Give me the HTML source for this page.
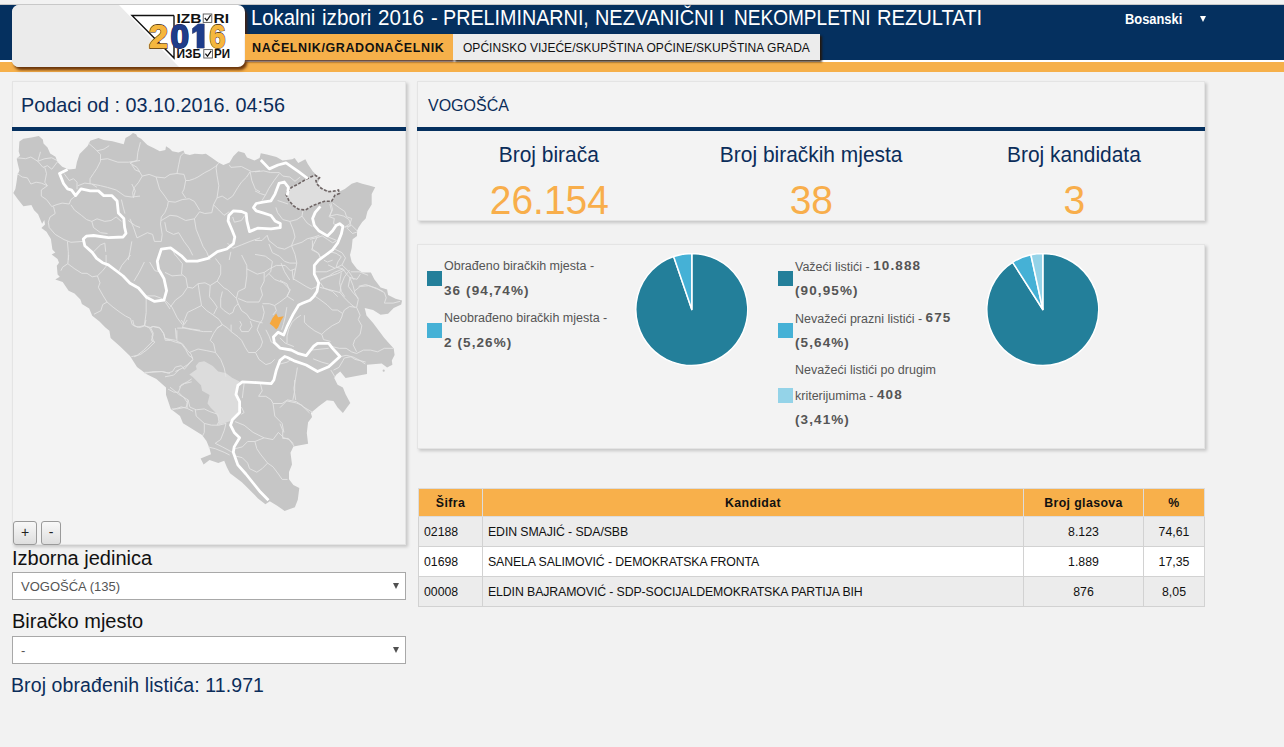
<!DOCTYPE html>
<html><head><meta charset="utf-8">
<style>
*{box-sizing:border-box;margin:0;padding:0}
html,body{width:1284px;height:747px;overflow:hidden;background:#f2f2f2;font-family:"Liberation Sans",sans-serif;position:relative}
.abs{position:absolute}
#topline{left:0;top:4px;width:1284px;height:1px;background:#c8c8c8}
#navy{left:0;top:5px;width:1284px;height:55px;background:#05305f}
#wline{left:0;top:60px;width:1284px;height:2px;background:#fff}
#orange{left:0;top:62px;width:1284px;height:10px;background:#f6b04a}
#logo{left:12px;top:5px;width:233px;height:62px;border-radius:7px;background:#fff;box-shadow:2px 3px 3px rgba(80,30,0,.85);overflow:hidden}
#title{left:0;top:5px;width:1000px;height:28px;color:#fff;font-size:22.5px;white-space:nowrap}
#title span{position:absolute;top:0;transform-origin:0 0}
#tab1{left:245px;top:34px;width:208px;height:26px;background:#f6b04a;color:#111;font-weight:bold;font-size:12.5px;padding:7px 0 0 7px;white-space:nowrap;letter-spacing:0.6px;box-shadow:1px 2px 2px rgba(60,20,0,.8)}
#tab2{left:453px;top:34px;width:367px;height:26px;background:#ececec;color:#111;font-size:12px;padding:7px 0 0 10px;white-space:nowrap;letter-spacing:0.03px;box-shadow:2px 2px 2px rgba(40,20,0,.85)}
#lang{left:1125px;top:11px;color:#fff;font-weight:bold;font-size:14px;transform-origin:0 0;transform:scaleX(0.92)}
#langarr{left:1200px;top:16px;width:0;height:0;border-left:3.5px solid transparent;border-right:3.5px solid transparent;border-top:6px solid #fff}
.panel{background:#f3f3f3;border:1px solid #e4e4e4;box-shadow:2px 2px 3px rgba(0,0,0,.18)}
#lp{left:12px;top:81px;width:394px;height:464px}
#lp .ttl{position:absolute;left:8px;top:12px;font-size:19.8px;color:#0b2d5a;white-space:nowrap}
.nline{position:absolute;left:-1px;right:-1px;top:45px;height:4px;background:#05305f}
#rp1{left:417px;top:81px;width:788px;height:140px}
#rp2{left:417px;top:244px;width:788px;height:205px}
.lbl{position:absolute;font-size:13px;color:#555}

.btn{position:absolute;top:439px;height:24px;border:1px solid #9a9a9a;border-radius:3px;background:linear-gradient(#f8f8f8,#dedede);font-size:14px;color:#222;text-align:center;line-height:21px}
.flbl{position:absolute;left:12px;font-size:20px;line-height:23px;color:#111;white-space:nowrap}
.sel{position:absolute;left:12px;width:394px;height:28px;border:1px solid #a8a8a8;background:#fff;font-size:13px;color:#555;padding:5.5px 0 0 8px;white-space:nowrap}
.sel .arr{position:absolute;left:380px;top:10px;width:0;height:0;border-left:3.5px solid transparent;border-right:3.5px solid transparent;border-top:6px solid #505050}
#broj{left:11px;top:674px;font-size:19.5px;line-height:23px;letter-spacing:0.1px;color:#0b2d5a;white-space:nowrap}

#rp1 .ttl{position:absolute;left:10px;top:15px;font-size:16px;color:#0b2d5a;white-space:nowrap}
.col{position:absolute;top:57px;width:262.67px;text-align:center;margin-left:-0.5px}
.col .h{font-size:22.5px;color:#0b2d5a;white-space:nowrap;display:inline-block;transform:scaleX(0.93);line-height:25px;margin-top:3px}
.col .n{font-size:41px;color:#f8ae4b;white-space:nowrap;line-height:44px;margin-top:11px;transform:scaleX(0.95)}

.lg{position:absolute;font-size:12.5px;color:#555;white-space:nowrap;line-height:15px}
.lg b{color:#555;font-size:13.5px;letter-spacing:1.1px;position:relative;top:-1px}
.sq{position:absolute;width:15px;height:15px}

#tbl{position:absolute;left:418px;top:488px;border-collapse:collapse;font-size:12.3px;color:#111}
#tbl td,#tbl th{border:1px solid #d2d2d2;height:30px;padding:0 5px;white-space:nowrap}
#tbl th{background:#f8b04b;font-weight:bold;height:28px;text-align:center;letter-spacing:0.4px;border-color:#dcdcdc}
#tbl tr.o td{background:#ececec}
#tbl tr.e td{background:#fff}
#tbl td.c{text-align:center}
#tbl td.k{letter-spacing:-0.1px}
</style></head><body>
<div class="abs" id="topline"></div>
<div class="abs" id="navy"></div>
<div class="abs" id="wline"></div>
<div class="abs" id="orange"></div>
<div class="abs" id="logo"><svg width="233" height="62" viewBox="12 5 233 62" style="position:absolute;left:0;top:0">
<polygon points="12,5 119,5 179,67 12,67" fill="#ebebeb"/>
<polyline points="174,15.5 132,15.5 174,58 174,15.5" fill="none" stroke="#111" stroke-width="1.4"/>
<g font-family="Liberation Sans" font-weight="bold" font-size="13" fill="#111">
<text x="176.5" y="22.6" textLength="25" lengthAdjust="spacingAndGlyphs">IZB</text>
<text x="213.5" y="22.6" textLength="15.5" lengthAdjust="spacingAndGlyphs">RI</text>
<text x="176.5" y="58.2" textLength="24.5" lengthAdjust="spacingAndGlyphs">ИЗБ</text>
<text x="214" y="58.2" textLength="16" lengthAdjust="spacingAndGlyphs">РИ</text>
</g>
<rect x="203.2" y="14" width="8.6" height="8.4" fill="none" stroke="#555" stroke-width="0.9"/>
<path d="M204.8,18 L206.9,20.6 L210.6,15.2" fill="none" stroke="#111" stroke-width="1.2"/>
<rect x="203.8" y="49.6" width="8.6" height="8.4" fill="none" stroke="#555" stroke-width="0.9"/>
<path d="M205.4,53.6 L207.5,56.2 L211.2,50.8" fill="none" stroke="#111" stroke-width="1.2"/>

<g font-family="Liberation Sans" font-weight="bold" font-size="33" paint-order="stroke" stroke-linejoin="round">
<text x="149" y="48" textLength="19" lengthAdjust="spacingAndGlyphs" fill="#f5b73e" stroke="#3a2a10" stroke-width="1.8">2</text>
<text x="149" y="48" textLength="19" lengthAdjust="spacingAndGlyphs" fill="#f5b73e" stroke="#f5b73e" stroke-width="0.7">2</text>
<text x="170.5" y="48" textLength="18.5" lengthAdjust="spacingAndGlyphs" fill="#1f3d8a" stroke="#2a2040" stroke-width="1.8">0</text>
<text x="170.5" y="48" textLength="18.5" lengthAdjust="spacingAndGlyphs" fill="#1f3d8a" stroke="#1f3d8a" stroke-width="0.9">0</text>
<path d="M197,48 L197,31 L192.5,33.5 L192.5,28.5 L198,24 L204.2,24 L204.2,48 Z" fill="#1f3d8a" stroke="#2a2040" stroke-width="0.6"/>
<text x="209.5" y="48" textLength="16" lengthAdjust="spacingAndGlyphs" fill="#f5b73e" stroke="#3a2a10" stroke-width="1.8">6</text>
<text x="209.5" y="48" textLength="16" lengthAdjust="spacingAndGlyphs" fill="#f5b73e" stroke="#f5b73e" stroke-width="0.7">6</text>
</g>
</svg></div>
<div class="abs" id="title"><span style="left:251.08px;transform:scaleX(0.9006)">Lokalni</span><span style="left:322.02px;transform:scaleX(0.9200)">izbori</span><span style="left:378.12px;transform:scaleX(0.9159)">2016</span><span style="left:431.35px;transform:scaleX(0.8893)">-</span><span style="left:442.82px;transform:scaleX(0.8771)">PRELIMINARNI,</span><span style="left:595.11px;transform:scaleX(0.8842)">NEZVANIČNI</span><span style="left:719.10px;transform:scaleX(0.8893)">I</span><span style="left:734.48px;transform:scaleX(0.8464)">NEKOMPLETNI</span><span style="left:876.69px;transform:scaleX(0.8955)">REZULTATI</span></div>
<div class="abs" id="tab1"><span id="t1s">NAČELNIK/GRADONAČELNIK</span></div>
<div class="abs" id="tab2"><span id="t2s">OPĆINSKO VIJEĆE/SKUPŠTINA OPĆINE/SKUPŠTINA GRADA</span></div>
<div class="abs" id="lang">Bosanski</div>
<div class="abs" id="langarr"></div>

<div class="abs panel" id="lp">
  <div class="ttl">Podaci od : 03.10.2016. 04:56</div>
  <div class="nline"></div>
<svg id="map" width="395" height="414" viewBox="12 131 395 414" style="position:absolute;left:-1px;top:49px">
<polygon points="19.4,141.4 23.4,138.7 31.4,137.4 38.8,136 42.8,139.4 43.5,143.4 47.5,147.4 50.2,153.4 55.5,156.8 57.5,162.1 62.2,166.8 68.9,169.5 75.6,168.8 76.9,162.1 79.6,154.1 87.6,146.1 90.3,140.7 98.4,138 103.7,140 112.5,141.2 123.7,144.3 125.5,138.1 129.9,135.6 133,133.1 136.1,134.3 137.4,136.8 141.1,138.7 143.6,141.2 147.4,145 153.6,148 159.8,151.2 165.4,149.9 166,146.2 169.8,148.7 172.3,151.2 178.5,152.4 183.5,150.5 184.7,153.7 189.7,154.9 194.7,153.7 202.2,154.3 205.9,153.7 212.1,158 218.4,162.4 223.4,164.9 229.6,162.4 233.3,156.2 238.3,151.2 244.5,153 247,157.4 254.5,160.5 259.6,158 260.8,153.3 266.9,154.5 276.5,156.9 282.5,160.5 292.2,159.3 294.6,158 298.2,162.9 305.4,159.3 307.8,164.1 312.7,171.3 316.3,175 320,178.5 317.5,183.4 322.3,188.2 332,191.8 339.6,191.5 344.8,188.9 351.7,183.7 357,182 362.2,183.7 369.1,185.4 375.2,187.2 371.7,194.1 371.7,204.6 367.4,211.5 365.7,218.5 362.2,222 358.7,227.2 357,230.7 357,235.9 352.6,239.3 351.7,248 350,255 351.7,262 357,268.9 362.2,272.4 370.9,272.4 374.3,279.3 380.6,287.5 387.1,289.4 388.1,295 395.6,298.7 402.1,300.6 401.2,304.4 393.7,308.1 388.1,313.7 380.6,314.7 373.1,310 364.7,308.1 366.5,315.6 373.1,323.1 378.7,330.6 384.3,338.1 393.7,348.4 394.6,355 391.8,360.6 392.4,364.7 387.1,367.4 381.7,363.4 367,364.7 367,374.1 345.6,378.1 340.2,371.4 336.2,374.8 334.2,378.1 337.6,384.8 342.9,387.5 345.6,394.2 350.3,402.9 346.9,407.6 342.9,412.9 337.6,407.6 333.5,400.9 326.9,400.2 318.8,406.2 310.8,412.9 312.1,416.9 308.1,422.3 306.8,433 308.1,443.7 293.4,446.4 290.5,452.7 292,464.5 289,471.9 289,479.2 293.4,485 299.3,488 297.8,499.8 294.9,507.2 284.6,510.9 277.2,505.7 269.8,501.3 265.4,504.3 258,498.4 252.2,492.5 241.9,482.2 230,473.3 227,467.4 224.2,460.8 218.3,463 209.5,460 203.6,464.5 200.6,458.6 211,454.2 209.5,448.3 206.5,441 202,435 190.3,427.7 183,423.2 180,415.9 170.8,409 166,394.7 166,387.5 156.4,379 146.7,374.2 137,367 130,356 120.2,346.5 110.6,338 109.4,330.8 105.4,327.5 99.5,321.6 92.2,315.7 89.2,308.4 81.9,303.9 80.4,299.5 74.5,293.6 68.6,290.7 62.7,281.9 55.3,279.6 59.8,276.7 57.6,274.5 56.8,265.7 59,262.7 57.6,259 51.7,254.6 55.3,252.4 52.4,249.5 50.9,239.1 46.5,231.8 41.4,228.1 45,224.4 44.3,220 42.1,223.7 38.1,214.3 34.1,210.3 31.4,205 23.4,206.3 18,199.6 13.3,193 15.4,188.9 16.7,180.9 17.4,175.5 19.4,170.2 18,164.8 16.7,158.8 20,155.4 18.7,151.4" fill="#c6c6c6"/>
<polygon points="195.7,366 198.9,362.3 204.3,361.2 212.8,366 218.2,371.4 225.7,373 232.1,377.8 239.6,381.6 236.4,386.4 235.3,396 239.6,401.4 238.5,414.2 231,420.7 225.7,422.8 218.2,425 219.3,419.6 215,412.1 210.7,407.8 207.5,403.5 209.6,395 202.1,390.7 201,385.3 192.5,376.8 189.3,374.6 196.8,369.3" fill="#dcdcdc"/>
<g id="thin" fill="none" stroke="#e4e4e4" stroke-width="0.9"><polyline points="17,157.8 25.7,158.7 30.9,157 37.8,161.3 44.8,158.7 51.8,157.8 57,160.5"/><polyline points="40.5,151.8 37.8,161.3 43,167.4 47.4,165.7 51.8,169.2 57.9,161.3"/><polyline points="44.8,167.4 46.5,173.5 44.8,182.2 47.4,185.7 41.3,190 41.3,196.1 46.5,199.6 51.8,206.6 56.1,204.8 62.2,203.1 69.2,204 70.9,199.6 75.3,196.1"/><polyline points="17,173.5 22.2,177 27.4,177.9 30.9,184 36.1,182.2 41.3,183.1 47.4,185.7"/><polyline points="53.5,206.6 55.2,213.5 50,217 48.3,222.2 49.2,227.5 55.2,234.4 64,239.6 70.9,242.3 83.1,241.4"/><polyline points="70.9,204.8 74.4,210 81.4,215.3 86.6,219.6 91.8,221.4 97,218.8 104.8,221.4 111,220.5 116.2,217 121.4,221.4"/><polyline points="91.8,221.4 93.5,227.5 100.5,232.7 107.5,233.5"/><polyline points="67.4,241.4 68.3,251.8 68.3,260"/><polyline points="88.3,143 95.3,149.1 100.5,154.4 100.5,161.3 97,168.3 93.5,173.5 90,178.7 90,184"/><polyline points="64,173.5 69.2,180.5 73.5,178.7 77,182.2 77,189.2"/><polyline points="77.9,185.7 84.8,183.1 91.8,184 97,187.4"/><polyline points="97,150.9 104,149.1 109.2,145.7"/><polyline points="100.5,159.6 107.5,158.7 117.9,162.2 128.3,162.2 140,160.5"/><polyline points="131.8,164.8 135.3,170 140,171.8"/><polyline points="91.8,184 100.5,185.7 107.5,187.4 116.2,190 124.9,196.1 131.8,197 140,196.1"/><polyline points="131.8,184 135.3,190.9 133.6,197"/><polyline points="121.4,199.6 123.1,206.6 124.9,213.5"/><polyline points="128.3,220.5 135.3,225.7 140,227.5"/><polyline points="131.8,241.4 130,251.8 128.3,260"/><polyline points="93.5,251.8 100.5,244.9 104.8,243.1 105.7,251.8"/><polyline points="140.4,142.2 137.8,152.6 137,160.5 130,163"/><polyline points="130,163.1 137,167.4 142.2,176.1 149.1,174.4 156.1,177 164.8,177.9 170,174.4 177,173.5 184,174.4"/><polyline points="142.2,176.1 138.7,182.2 134.4,187.4 132.6,192.7 133.5,197.9"/><polyline points="177,173.5 178.7,164.8 180.5,156.1 184,152.6"/><polyline points="184,174.4 185.7,180.5 189.2,180.5 194.4,178.7 197.9,177 204.8,172.6 210,170 215.3,166.5 218.8,163.1"/><polyline points="156.1,177 159.6,189.2 164.8,196.1 168.3,201.4 175.2,202.2 182.2,199.6 189.2,198.7 194.4,201.4 199.6,210"/><polyline points="185.7,180.5 184,189.2 182.2,192.7 185.7,197.9"/><polyline points="168.3,201.4 167.4,206.6 164.8,212.7 161.3,217 160.5,224 162.2,234.4 161.3,241.4"/><polyline points="161.3,220.5 170,215.3 177,216.1 185.7,220.5 194.4,218.8 199.6,211.8 204.8,213.5 211.8,212.7 213.5,204.8 217,197.9 218.8,185.7 217,175.2 216.1,168.3 217,164.8"/><polyline points="194.4,218.8 196.1,229.2 199.6,237.9 203.1,246.6 206.6,251.8 210,260"/><polyline points="164.8,222.2 166.5,231 173.5,234.4 178.7,232.7 184,241.4 189.2,248.3 192.7,255.3"/><polyline points="217,197.9 222.2,196.1 227.5,199.6 232.7,196.1 237.9,187.4 241.4,182.2 246.6,177 250.1,171.8"/><polyline points="213.5,204.8 218.8,210 224,215.3 229.2,211.8"/><polyline points="229.2,164.8 230.9,167.4 241.4,166.5 251.8,171.8 260,170.9"/><polyline points="250.1,171.8 251.8,180.5 255.3,189.2 260,191.8"/><polyline points="130,218.8 133.5,227.5 137,237.9 147.4,232.7 152.6,234.4 154.4,241.4 161.3,241.4"/><polyline points="232.7,217 234.4,222.2 241.4,220.5 244.9,215.3"/><polyline points="227.5,243.1 232.7,248.3 241.4,244.9 250.1,241.4 260,237.9"/><polyline points="230.9,251.8 229.2,260"/><polyline points="171.8,248.3 175.2,255.3"/><polyline points="255,171.8 263.7,170.9 270.7,172.6 279.4,172.6 282.8,176.1 289.8,177 295,181.3 300.2,177"/><polyline points="279.4,173.5 274.1,180.5 268.9,188.3 265.4,195.2 262,200.5"/><polyline points="255,190.9 260.2,193.5 265.4,195.2"/><polyline points="277.6,200.5 282.8,202.2 288.1,204"/><polyline points="275.9,207.4 277.6,212.7 282.8,219.6 289.8,221.4 296.8,219.6 302,216.1 302.9,210.9"/><polyline points="289.8,221.4 293.3,230 295,237 291.5,245.7 295,254.4 296.8,263.1 295,271.8 293.3,280"/><polyline points="302,216.1 307.2,223.1 312.4,226.6"/><polyline points="255,240.5 262,240.5 267.2,235.3 268.9,240.5 277.6,247.5 284.6,249.2 291.5,245.7 302,242.2 307.2,238.8 314.2,237 319.4,235.3"/><polyline points="268.9,244 272.4,252.7 279.4,256.2 284.6,261.4 289.8,263.1 296.8,263.1"/><polyline points="312.4,240.5 312.4,249.2 317.7,252.7 321.1,257.9"/><polyline points="255,254.4 265.4,256.2 272.4,261.4 270.7,271.8 265.4,277"/><polyline points="281.1,263.1 284.6,271.8 289.8,280"/><polyline points="329.8,204 331.6,210.9 329.8,216.1 336.8,214.4 343.8,216.1 349,219.6 350.7,224.8 347.2,228.3"/><polyline points="347.2,228.3 352.5,233.5 357.7,231.8"/><polyline points="328.1,237 336.8,240.5"/><polyline points="335,249.2 342,252.7 345.5,257.9 342,264.9 349,271.8 354.2,280"/><polyline points="328.1,264.9 335,268.3 342,264.9"/><polyline points="315.9,271.8 326.4,271.8 335,268.3"/><polyline points="350.7,271.8 359.4,271.8 368.1,275.3"/><polyline points="68.7,255 67.8,263.7 62.6,267.2 60.9,270.7"/><polyline points="67.8,263.7 74.8,268.9 81.8,273.3 87,273.3 92.2,276.8 97.4,275.9 102.7,270.7 106.1,266.3 106.1,255"/><polyline points="97.4,275.9 100,282.8 98.3,287.2 102.7,295 107,302 102.7,304.6 100.9,310.7 94,314.2"/><polyline points="107,302 113.1,307.2 120.1,312.4 125.3,315.9 130.5,318.5 132.2,324.6 137.5,327.2 144.4,325.5 149.6,328.1 153.1,326.4 160.1,328.1 163.6,333.3 165.3,340.3 170,340.3"/><polyline points="146.2,296.8 146.2,312.4 144.4,325.5"/><polyline points="149.6,328.1 153.1,335 151.4,340.3 154.9,342 147.9,349 140.9,354.2 134,356.8"/><polyline points="144.4,373.3 153.1,371.6 161.8,371.6 170,373.3"/><polyline points="130.5,255 121.8,265.4 118.3,272.4"/><polyline points="144.4,262 139.2,272.4 134,281.1"/><polyline points="149.6,262 154.9,270.7 161.8,272.4"/><polyline points="146.2,295.9 154.9,295.9 161.8,298.5 165.3,302 170,309"/><polyline points="175.4,255 182.4,263.7 181.5,274.1 185.9,277.6 187.6,287.2 192.8,288.1 198.1,283.7 205,282.8 210.2,285.5 217.2,281.1 220.7,274.1 220.7,265.4 215.5,258.5"/><polyline points="165,272.4 172,275.9 182.4,275"/><polyline points="187.6,287.2 182.4,295 175.4,300.2 170.2,307.2"/><polyline points="198.1,283.7 199.8,295 201.5,305.5 194.6,309 187.6,312.4 184.1,321.1 182.4,328.1"/><polyline points="201.5,305.5 206.8,310.7 212,314.2 219,319.4 222.4,324.6 217.2,328.1 213.7,333.3 210.2,340.3 213.7,343.8 215.5,352.5 220.7,359.4 224.2,368.1 225.9,376.8"/><polyline points="210.2,285.5 209.4,296.8 213.7,302 217.2,307.2 213.7,314.2"/><polyline points="217.2,281.1 224.2,288.1 227.7,289.8 232.9,295 236.4,298.5 238.1,303.7 234.6,307.2 232.9,312.4 229.4,314.2 224.2,310.7 220.7,307.2 220.7,298.5 222.4,291.5"/><polyline points="238.1,303.7 241.6,310.7 246.8,314.2 250.3,319.4 255.5,321.1 262.5,322.9"/><polyline points="239.8,321.1 241.6,324.6 239.8,328.1 241.6,331.6 248.5,331.6 252,326.4 250.3,321.1"/><polyline points="231.1,331.6 238.1,336.8 241.6,340.3 245.1,347.2 248.5,352.5 255.5,352.5 259,359.4 265.9,364.6 271.2,362.9 274.6,359.4"/><polyline points="217.2,328.1 222.4,324.6 227.7,328.1 231.1,331.6 231.1,324.6"/><polyline points="241.6,255 246.8,265.4 246.8,275.9 245.1,288.1 238.1,291.5 236.4,298.5"/><polyline points="246.8,268.9 257.2,274.1 264.2,272.4 269.4,268.9 276.4,265.4 285.1,265.4 290.3,270.7 295,268.9"/><polyline points="264.2,272.4 264.2,281.1 260.7,288.1 262.5,295 259,302 246.8,302 238.1,298.5"/><polyline points="269.4,274.1 274.6,279.4 283.3,282.8 290.3,289.8 286.8,296.8 279.9,302 274.6,305.5 269.4,303.7 262.5,303.7"/><polyline points="262.5,305.5 264.2,312.4 262.5,319.4 259,324.6 257.2,329.8 260.7,336.8 262.5,342 260.7,347.2 255.5,352.5"/><polyline points="274.6,305.5 276.4,310.7 272.9,315"/><polyline points="286.8,307.2 285.1,317.7 283.3,324.6 281.6,329.8"/><polyline points="265.9,329.8 269.4,336.8 271.2,342 278.1,345.5"/><polyline points="165,338.5 175.4,340.3 182.4,343.8 187.6,350.7 191.1,354.2 192.8,359.4 187.6,364.6 182.4,368.1 175.4,371.6"/><polyline points="177.2,328.1 184.1,328.1 192.8,329.8 203.3,331.6 212,331.6"/><polyline points="175.4,328.1 176.3,338.5"/><polyline points="189.4,352.5 198.1,349 206.8,350.7 215.5,352.5"/><polyline points="165,376.8 173.7,375.1 178.9,369.9"/><polyline points="165,300.2 172,307.2 177.2,317.7 182.4,324.6"/><polyline points="292.2,270 293.1,278.7 299.1,282.2 306.1,286.5 311.3,289.1 317.4,286.5"/><polyline points="280,280.4 287,283.9 289.6,290.9 287,296.1 293.9,300.5"/><polyline points="320,280.4 327,277 337.4,273.5 344.4,270"/><polyline points="320,287.4 327,289.1 334,290.9 340,292.6 340.9,285.7 344.4,277 349.6,270"/><polyline points="314.8,296.1 320,299.6 327,304.8 332.2,310 337.4,310 342.7,313.5 344.4,310 349.6,306.5 356.6,307.4"/><polyline points="340,292.6 344.4,297.8 349.6,303.1 354.8,307.4"/><polyline points="349.6,277 353.1,285.7 354.8,292.6 358.3,299.6 356.6,307.4 360.1,315.2 358.3,319.6 361.8,325.7 360.1,334.4 354.8,339.6 353.1,344.8 356.6,351.8"/><polyline points="354.8,290.9 360.1,286.5 368.8,285.7 377.5,289.1 384.4,292.6 386.2,297.8 384.4,303.1 393.1,303.1 400.1,301.3"/><polyline points="304.4,315.2 304.4,322.2 307.8,325.7 314.8,330.9 321.8,334.4 325.2,330.9 332.2,325.7 339.2,322.2 341.8,317 342.7,313.5"/><polyline points="321.8,334.4 323.5,339.6 330.5,341.4"/><polyline points="332.2,346.6 339.2,348.3 346.1,348.3 351.4,351.8 356.6,353.5 363.5,350.1 370.5,350.1 377.5,351.8 384.4,348.3 393.1,348.3"/><polyline points="339.2,357 346.1,355.3 353.1,357 360.1,360.5 365.3,364"/><polyline points="300.9,315.2 295.7,318.7 292.2,322.2 288.7,329.2 287,336.1 287,343.1"/><polyline points="280,337.9 285.2,343.1 293.9,346.6"/><polyline points="280,364 287,362.2 292.2,358.8"/><polyline points="297.4,367.5 295.7,377.9 293.9,388.3 295.7,400"/><polyline points="311.3,350.1 320,349.2 328.7,348.3"/><polyline points="313.1,358.8 321.8,362.2 328.7,364"/><polyline points="170,387.2 179,394.5 188.1,399.9 186.3,407.1 177.2,408.9 171.8,408.9"/><polyline points="188.1,399.9 189.9,407.1 196.2,409.8 204.3,408.9 209.8,411.6 217.9,414.3 218.8,421.6 217,425.2"/><polyline points="179,387.2 184.5,383.6 191.7,381.8"/><polyline points="195.3,409.8 196.2,416.1 204.3,423.4 204.3,432.4 202.5,436"/><polyline points="204.3,423.4 211.6,425.2 218.8,425.2 226,423.4 224.2,430.6 220.6,439.6 215.2,443.3 222.4,446.9 232.4,452.3"/><polyline points="208,446.9 215.2,448.7 224.2,452.3 229.6,455"/><polyline points="235.1,421.6 244.1,425.2 253.1,432.4 264,437.8 273,439.6 278.4,432.4 283.9,437.8 289.3,439.6 294.7,446.9"/><polyline points="264,437.8 254.9,441.5 247.7,441.5 242.3,446.9 235.1,448.7"/><polyline points="254.9,441.5 256.8,448.7 260.4,454.1 267.6,463.1 273,466.8 278.4,474 282.1,479.4 287.5,479.4"/><polyline points="235.1,455.9 242.3,457.7 247.7,463.1 249.5,468.6 256.8,472.2 262.2,468.6 267.6,463.1"/><polyline points="273,403.5 274.8,416.1 282.1,423.4 283.9,432.4"/><polyline points="273,403.5 282.1,403.5 287.5,399.9 296.5,401.7 303.7,407.1 312.8,412.5"/><polyline points="294.7,380 294.7,390.8 292.9,399.9"/><polyline points="260.4,383.6 262.2,390.8 258.6,396.3 265.8,396.3 271.2,399.9 273,403.5"/><polyline points="244.1,383.6 243.2,390.8 242.3,398.1"/><polyline points="241.4,407.1 244.1,412.5 241.4,414.3"/><polyline points="330.9,202.8 332.6,209.8 329.1,216.7 334.3,218.5 333.5,223.7 337.8,225.4"/><polyline points="332.6,202.8 339.6,208 344.8,211.5 346.5,216.7 351.7,218.5 350,223.7 344.8,227.2"/><polyline points="344.8,227.2 351.7,225.4 357,230.7"/><polyline points="310,239.3 317,237.6 322.2,235.9 327.4,239.3 332.6,242.8 336.1,241.1"/><polyline points="317,237.6 313.5,244.6 311.7,249.8 318.7,253.3 320.4,258.5"/><polyline points="329.1,251.5 336.1,253.3 341.3,256.7 337.8,262 336.1,267.2 343,268.9 346.5,274.1 350,277.6 357,279.3 360.4,274.1"/><polyline points="343,268.9 334.3,272.4 329.1,275.9 320.4,279.3"/><polyline points="350,277.6 348.3,286.3 353.5,293.3 358.7,298.5"/><polyline points="341.3,272.4 339.6,282.8 341.3,291.5 344.8,296.7"/><polyline points="358.7,286.3 365.7,284.6 376.1,288 383,291.5"/><polyline points="323.9,260.2 327.4,262 332.6,260.2"/><polyline points="320.4,282.8 323.9,288 332.6,291.5 337.8,296.7"/><polyline points="132.7,320 134.2,325.9 140.1,327.4 144.5,325.9 150.4,327.4 153.3,326.6 159.2,327.4 163.6,333.3 165.1,338.4 175.4,342.1 181.3,343.6 185.7,349.5 188.7,355.3 193.1,358.3"/><polyline points="146,320 144.5,325.9"/><polyline points="150.4,327.4 153.3,333.3 151.9,336.2 153.3,340.6 148.9,345 143,350.9 137.1,355.3 131.2,356.8"/><polyline points="144.5,372.3 151.9,372.3 162.2,371.5 168.1,373 172.5,371.5 175.4,367.1 181.3,365.7 184.3,369.3 190.1,362.7 193.1,359.8"/><polyline points="176.9,330.3 176.9,340.6"/><polyline points="182.8,327.4 190.1,328.8 200,330.3"/><polyline points="181.3,320 184.3,324.4 187.2,320"/><polyline points="168.1,389.2 173.9,392.2 178.4,392.2 181.3,384.8 187.2,381.9 191.6,378.9"/><polyline points="178.4,392.2 184.3,398.1 187.2,402.5 187.2,408.4 193.1,411.3"/><polyline points="172.5,409.8 181.3,406.9 187.2,408.4"/><polyline points="280,407.6 286.7,400.9 296.1,402.9 301.4,404.9 309.5,412.9"/><polyline points="280,423.6 282.7,430.3 282.7,438.4 288,438.4 293.4,443.7"/><polyline points="333.5,370.1 338.9,367.4 342.9,360.7 344.3,358 351,356.7 355,359.4 360.3,360.7 365.7,362"/><polyline points="330.9,370.1 334.9,376.8"/></g>
<polygon points="287.2,191.8 291.5,187.4 298.5,183.9 305.5,179.6 310.7,177 315,175.2 319.4,177.8 315.9,180.5 316.8,183.9 321.1,188.3 328.1,191.8 335,190.9 338.5,190 339.4,193.5 335,195.2 331.6,201.3 324.6,201.3 319.4,203.1 312.4,205.7 305.5,210 298.5,209.2 293.3,205.7 288.9,200.5 286.3,195.2" fill="#dedede" stroke="#6e6464" stroke-width="1.6" stroke-dasharray="3,1.6"/>
<polyline points="67.6,169.6 59.5,173.5 63.5,183.5 67.6,188.9 71.6,190.2 75.6,195.6 81,188.9 90.3,190.9 98.4,190.9 103.7,195.6 111.7,195.6 117.1,201 118.4,213 123.8,218.4 124.6,227.4 126,233.3 123.1,237 108.4,237.7 93.6,235.5 86.3,236.2 83.3,239.1 84.8,245.8 92.2,252.4 96.6,258.3 102.5,262.7 108.4,264.9 117.2,271.5 123.1,276 130,283.3 138.5,288 146.5,297.3 154.6,301.4 164,300 166.6,290.6 164,278.6 158.6,269.2 157.3,261.2 161.3,249.1 170.6,247.8 181.4,255.8 186.7,261.2 197.4,261.2 208,258.4 217.4,251.7 226.8,249 233.5,243.6 234.8,236.9 232.1,230.2 228.1,220.9 228.8,215.5 233.5,210.8 241.5,211.5 246.2,213.5 246.9,220.9 249.5,231.6 257.6,228.2 271,228.9 280.3,227.6 280.3,223.5 275,220.9 271,215.5 262.9,212.8 256.2,210.8 253.5,207.5 256.2,203.5 262.9,202.1 271,200.8 275,194.1 279,183.4 284.3,182 288.4,187.4 287.3,195.4" fill="none" stroke="#fff" stroke-width="2.8" stroke-linejoin="round"/>
<polyline points="260.8,160 269.3,168.9 278,165 286,162.9 298.2,171.3 307.8,178.5" fill="none" stroke="#fff" stroke-width="2.8" stroke-linejoin="round"/>
<polyline points="320.4,206.3 315.2,212.4 312.6,218.5 314.3,225.4 318.7,230.7 327.4,235.9 332.6,230.7 336.1,225.4 339.6,223.7 343,226.3 341.3,234.1 337.8,242.8 332.6,249.8 325.7,255 318.7,260.2 314.3,265.4 314.3,274.1 318.7,282.8 317,291.5 313.5,296.7 310,300.2 303,303 298.7,305 293.1,314.4 287.5,325.6 283.7,335 278.1,332.2 273.4,336.9 274.3,342.5 280,348.1 291.2,350 298.7,353.7 306.2,355.6 313.7,346.2 317.5,343.4 328.7,343.4 332.4,348.1 340,356.5 328.7,366.8 317.5,371.5 306.2,365 295,361.2 287.5,357.5 284.7,356.5 280,360.3 276.2,370.6 273.9,380 271.2,383.6 256.8,382.7 242.3,381.8 237.8,385.4 236,394.5 239.6,401.7 239.6,412.5 232.4,419.8 230.5,425.2 234.2,432.4 239.6,437.8 234.2,446.9 233.3,452.3 237.8,464.9 245.9,474 253.1,483 260.4,492.1 268.5,500.2" fill="none" stroke="#fff" stroke-width="2.8" stroke-linejoin="round"/>
<polygon points="269.7,323.7 272.5,318.1 276.2,313.4 278.1,317.2 283.7,316.2 280.9,320.9 278.1,327.5 276.2,329.4 273.4,326.5" fill="#f5a83f"/>
<circle cx="383.7" cy="370.7" r="1.1" fill="#c6c6c6"/>
</svg>
<div class="btn" style="left:0px;width:24px">+</div>
<div class="btn" style="left:28px;width:20px">-</div>
</div>
<div class="flbl" style="top:547px">Izborna jedinica</div>
<div class="sel" style="top:572px">VOGOŠĆA (135)<span class="arr"></span></div>
<div class="flbl" style="top:610px">Biračko mjesto</div>
<div class="sel" style="top:636px">-<span class="arr"></span></div>
<div class="abs" id="broj">Broj obrađenih listića: 11.971</div>

<div class="abs panel" id="rp1">
  <div class="ttl">VOGOŠĆA</div>
  <div class="nline"></div>
  <div class="col" style="left:0"><div class="h">Broj birača</div><div class="n">26.154</div></div>
  <div class="col" style="left:262.67px"><div class="h">Broj biračkih mjesta</div><div class="n">38</div></div>
  <div class="col" style="left:525.33px"><div class="h">Broj kandidata</div><div class="n">3</div></div>
</div>
<div class="abs panel" id="rp2">
<div class="sq" style="left:9px;top:26px;background:#237f9a"></div>
<div class="sq" style="left:9px;top:78px;background:#45b1d6"></div>
<div class="lg" style="left:26px;top:14px">Obrađeno biračkih mjesta -</div>
<div class="lg" style="left:26px;top:39px"><b>36 (94,74%)</b></div>
<div class="lg" style="left:26px;top:66px">Neobrađeno biračkih mjesta -</div>
<div class="lg" style="left:26px;top:91px"><b>2 (5,26%)</b></div>
<svg style="position:absolute;left:217px;top:8px" width="113" height="113"><path d="M56.8,56.5 L56.80,0.50 A56,56 0 1 1 38.63,3.53 Z" fill="#237f9a" stroke="#fff" stroke-width="1.5" stroke-linejoin="round"/><path d="M56.8,56.5 L38.63,3.53 A56,56 0 0 1 56.80,0.50 Z" fill="#45b1d6" stroke="#fff" stroke-width="1.5" stroke-linejoin="round"/></svg>
<div class="sq" style="left:360px;top:26px;background:#237f9a"></div>
<div class="sq" style="left:360px;top:78px;background:#45b1d6"></div>
<div class="sq" style="left:360px;top:143px;background:#94d3e8"></div>
<div class="lg" style="left:377px;top:14px">Važeći listići - <b>10.888</b></div>
<div class="lg" style="left:377px;top:39px"><b>(90,95%)</b></div>
<div class="lg" style="left:377px;top:66px">Nevažeći prazni listići - <b>675</b></div>
<div class="lg" style="left:377px;top:91px"><b>(5,64%)</b></div>
<div class="lg" style="left:377px;top:118px">Nevažeći listići po drugim</div>
<div class="lg" style="left:377px;top:143px">kriterijumima - <b>408</b></div>
<div class="lg" style="left:377px;top:168px"><b>(3,41%)</b></div>
<svg style="position:absolute;left:568px;top:8px" width="113" height="113"><path d="M56.8,56.5 L56.80,0.50 A56,56 0 1 1 26.65,9.31 Z" fill="#237f9a" stroke="#fff" stroke-width="1.5" stroke-linejoin="round"/><path d="M56.8,56.5 L26.65,9.31 A56,56 0 0 1 44.89,1.78 Z" fill="#45b1d6" stroke="#fff" stroke-width="1.5" stroke-linejoin="round"/><path d="M56.8,56.5 L44.89,1.78 A56,56 0 0 1 56.80,0.50 Z" fill="#94d3e8" stroke="#fff" stroke-width="1.5" stroke-linejoin="round"/></svg>
</div>
<table id="tbl">
<tr><th style="width:64px">Šifra</th><th style="width:541px">Kandidat</th><th style="width:120px">Broj glasova</th><th style="width:61px">%</th></tr>
<tr class="o"><td>02188</td><td class="k">EDIN SMAJIĆ - SDA/SBB</td><td class="c">8.123</td><td class="c">74,61</td></tr>
<tr class="e"><td>01698</td><td class="k">SANELA SALIMOVIĆ - DEMOKRATSKA FRONTA</td><td class="c">1.889</td><td class="c">17,35</td></tr>
<tr class="o"><td>00008</td><td class="k">ELDIN BAJRAMOVIĆ - SDP-SOCIJALDEMOKRATSKA PARTIJA BIH</td><td class="c">876</td><td class="c">8,05</td></tr>
</table>
</body></html>
